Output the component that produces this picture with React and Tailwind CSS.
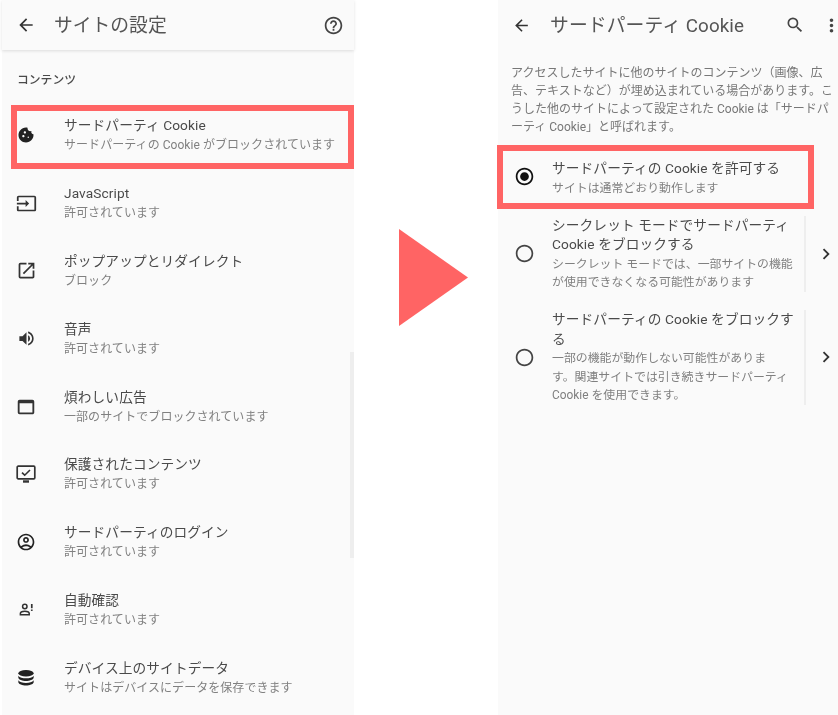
import React from "react";
import { MdArrowBack, MdHelpOutline, MdCookie, MdInput, MdOpenInNew, MdVolumeUp, MdWebAsset, MdOutlineAccountCircle, MdSearch, MdMoreVert, MdChevronRight, MdRadioButtonChecked, MdRadioButtonUnchecked } from "react-icons/md";

const font = "font-['Roboto','Noto_Sans_CJK_JP',sans-serif]";

function ProtectedIcon() {
  return (
    <svg viewBox="0 0 20 20" className="w-[20px] h-[20px] text-[#333]" fill="none" stroke="currentColor">
      <rect x="1.2" y="2.2" width="17.6" height="12.6" rx="1" strokeWidth="1.7" />
      <path d="M6 8.6l2.7 2.6L14 6" strokeWidth="1.6" />
      <path d="M7 17.5h6" strokeWidth="2.4" />
    </svg>
  );
}
function AutoIcon() {
  return (
    <svg viewBox="0 0 20 20" className="w-[17px] h-[17px] text-[#333]" fill="none" stroke="currentColor">
      <circle cx="8" cy="6.5" r="2.6" strokeWidth="1.8" />
      <path d="M2.8 16.2v-1.4c0-1.8 2.6-2.8 5.2-2.8s5.2 1 5.2 2.8v1.4z" strokeWidth="1.8" />
      <path d="M16.2 3.5v5" strokeWidth="2" />
      <path d="M16.2 10v1.7" strokeWidth="2" />
    </svg>
  );
}
function DataIcon() {
  return (
    <svg viewBox="0 0 20 20" className="w-[18px] h-[18px] text-[#222]" fill="currentColor">
      <ellipse cx="10" cy="4.8" rx="8.500" ry="3.600" />
      <path d="M1.500 7.400c1.200 1.900 4.800 3 8.500 3s7.300-1.100 8.500-3v2.600c-.6 1.900-4.300 3.300-8.500 3.300s-7.900-1.400-8.500-3.300z" />
      <path d="M1.500 12.600c1.200 1.900 4.800 3 8.500 3s7.300-1.100 8.500-3v2.400c-.6 1.900-4.300 3.300-8.500 3.300s-7.900-1.400-8.500-3.300z" />
    </svg>
  );
}

const rows = [
  [<MdCookie size={18} className="text-[#222]" />, "サードパーティ Cookie", "サードパーティの Cookie がブロックされています"],
  [<MdInput size={21} className="text-[#333]" />, "JavaScript", "許可されています"],
  [<MdOpenInNew size={21} className="text-[#333]" />, "ポップアップとリダイレクト", "ブロック"],
  [<MdVolumeUp size={19} className="text-[#333]" />, "音声", "許可されています"],
  [<MdWebAsset size={22} className="text-[#333]" />, "煩わしい広告", "一部のサイトでブロックされています"],
  [<ProtectedIcon />, "保護されたコンテンツ", "許可されています"],
  [<MdOutlineAccountCircle size={20} className="text-[#222]" />, "サードパーティのログイン", "許可されています"],
  [<AutoIcon />, "自動確認", "許可されています"],
  [<DataIcon />, "デバイス上のサイトデータ", "サイトはデバイスにデータを保存できます"],
];

function Row({ icon, title, sub }) {
  return (
    <div className="h-[67.8px] shrink-0 flex items-center">
      <div className="w-[48px] pl-[2px] pr-[2px] flex justify-center shrink-0">{icon}</div>
      <div className="ml-[14px]">
        <div className="text-[13.7px] leading-[20px] tracking-[0.1px] text-[#4a4a4a] whitespace-nowrap">{title}</div>
        <div className="text-[12px] leading-[20px] tracking-[0.05px] text-[#808080] whitespace-nowrap">{sub}</div>
      </div>
    </div>
  );
}

function Option({ icon, title, sub, chevron }) {
  return (
    <div className="flex items-center">
      <div className="w-[52px] flex justify-center shrink-0">{icon}</div>
      <div className={chevron ? "ml-[2px] w-[254px] border-r-2 border-[#eeeeee]" : "ml-[2px] w-[254px]"}>
        <div className="text-[13.7px] leading-[19.500px] tracking-[0.1px] text-[#4a4a4a]">{title}</div>
        <div className="text-[11.9px] leading-[18.500px] text-[#808080]">{sub}</div>
      </div>
      {chevron && <MdChevronRight size={22} className="text-[#333] ml-[9px]" />}
    </div>
  );
}

export default function App() {
  return (
    <div className={`w-[838px] h-[715px] overflow-hidden bg-white flex blur-[0.4px] ${font}`}>
      <div className="relative ml-[2px] w-[352px] h-full bg-[#fafafa] shrink-0">
        <div className="h-[50px] flex items-center shadow-[0_1px_3px_rgba(0,0,0,0.12)]">
          <MdArrowBack size={20} className="ml-[14px] text-[#333]" />
          <span className="ml-[18px] mt-[3px] text-[18.800px] text-[#555] whitespace-nowrap">サイトの設定</span>
          <MdHelpOutline size={21} className="ml-auto mr-[10px] text-[#444]" />
        </div>
        <div className="h-[51.500px] pl-[15px] pt-[21px] text-[11.800px] leading-[18px] font-medium text-[#4a4a4a]">コンテンツ</div>
        <div className="flex flex-col">
          {rows.map((r, i) => <Row key={i} icon={r[0]} title={r[1]} sub={r[2]} />)}
        </div>
        <div className="absolute right-0 top-[352px] w-[4px] h-[206px] bg-[#eeeeee]" />
        <div className="absolute left-[9px] top-[105px] w-[343px] h-[64px] border-[6px] border-[#ff6464]" />
      </div>

      <div className="w-[144px] shrink-0 flex items-center justify-end">
        <svg width="69" height="97" viewBox="0 0 69 97" className="mr-[30px] mb-[161px]">
          <path d="M0 0L69 48.500L0 97z" fill="#ff6464" />
        </svg>
      </div>

      <div className="relative w-[340px] h-full bg-[#fafafa] shrink-0">
        <div className="h-[50px] flex items-center">
          <MdArrowBack size={19} className="ml-[14px] text-[#333]" />
          <span className="ml-[19px] mt-[3px] text-[18.800px] tracking-[0.1px] text-[#555] whitespace-nowrap">サードパーティ Cookie</span>
          <MdSearch size={20} className="ml-auto mr-[2px] text-[#444]" />
          <MdMoreVert size={21} className="ml-[14px] mr-[-4px] text-[#444]" />
        </div>
        <div className="mt-[14px] ml-[13px] text-[12px] leading-[18px] text-[#777] whitespace-nowrap">
          アクセスしたサイトに他のサイトのコンテンツ（画像、広<br />
          告、テキストなど）が埋め込まれている場合があります。こ<br />
          うした他のサイトによって設定された Cookie は「サードパ<br />
          ーティ Cookie」と呼ばれます。
        </div>
        <div className="mt-[23px] flex flex-col gap-[18.500px]">
          <Option
            icon={<MdRadioButtonChecked size={21} className="text-[#111] mb-[3px]" />}
            title="サードパーティの Cookie を許可する"
            sub="サイトは通常どおり動作します"
          />
          <Option
            chevron
            icon={<MdRadioButtonUnchecked size={21} className="text-[#444]" />}
            title={<>シークレット モードでサードパーティ<br />Cookie をブロックする</>}
            sub={<>シークレット モードでは、一部サイトの機能<br />が使用できなくなる可能性があります</>}
          />
          <Option
            chevron
            icon={<MdRadioButtonUnchecked size={21} className="text-[#444]" />}
            title={<>サードパーティの Cookie をブロックす<br />る</>}
            sub={<>一部の機能が動作しない可能性がありま<br />す。関連サイトでは引き続きサードパーティ<br />Cookie を使用できます。</>}
          />
        </div>
        <div className="absolute left-[-1px] top-[145px] w-[317px] h-[64px] border-[6px] border-[#ff6464]" />
      </div>
    </div>
  );
}
